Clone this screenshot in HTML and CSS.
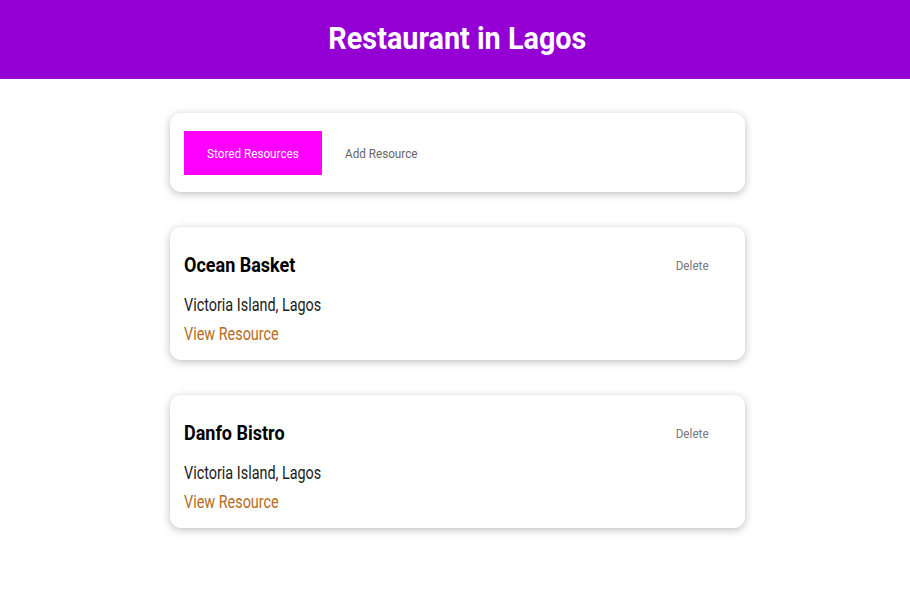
FILE: index.html
```html
<!DOCTYPE html>
<html lang="en">
<head>
<meta charset="utf-8">
<title>Restaurant in Lagos</title>
<link rel="stylesheet" href="styles.css">
</head>
<body>
<header class="topbar">
  <h1 class="topbar-title"><span class="nx nx-c">Restaurant in Lagos</span></h1>
</header>
<main class="page">
  <section class="card tabs">
    <button class="btn btn-solid"><span class="nx nx-c">Stored Resources</span></button>
    <button class="btn btn-flat btn-add"><span class="nx">Add Resource</span></button>
  </section>
  <ul class="list">
    <li class="card item">
      <div class="item-head">
        <h3 class="item-title"><span class="nx">Ocean Basket</span></h3>
        <button class="btn btn-flat btn-delete"><span class="nx nx-r">Delete</span></button>
      </div>
      <p class="item-desc"><span class="nx nx-narrow">Victoria Island, Lagos</span></p>
      <a class="item-link" href="#"><span class="nx nx-narrow">View Resource</span></a>
    </li>
    <li class="card item">
      <div class="item-head">
        <h3 class="item-title"><span class="nx">Danfo Bistro</span></h3>
        <button class="btn btn-flat btn-delete"><span class="nx nx-r">Delete</span></button>
      </div>
      <p class="item-desc"><span class="nx nx-narrow">Victoria Island, Lagos</span></p>
      <a class="item-link" href="#"><span class="nx nx-narrow">View Resource</span></a>
    </li>
  </ul>
</main>
</body>
</html>
```
FILE: styles.css
```css
* { box-sizing: border-box; }
html, body { margin: 0; padding: 0; }
body {
  font-family: Roboto, "Liberation Sans", sans-serif;
  background: #ffffff;
  color: #000;
}
/* narrow (condensed) text rendering */
.nx {
  display: inline-block;
  transform: scaleX(0.9);
  transform-origin: left center;
  white-space: nowrap;
}
.nx-c { transform-origin: center center; }
.nx-r { transform-origin: right center; }
.nx-narrow { transform: scaleX(0.8); }

.topbar {
  height: 79px;
  background: #9400d3;
  display: flex;
  justify-content: center;
  align-items: center;
  padding: 0 0 4px 5px;
}
.topbar-title {
  margin: 0;
  color: #fff;
  font-size: 32px;
  font-weight: 700;
}
.page {
  padding: 34px 0 40px 5px;
  display: flex;
  flex-direction: column;
  align-items: center;
}
.card {
  width: 575px;
  background: #fff;
  border-radius: 11px;
  box-shadow: 0 2px 8px rgba(0, 0, 0, 0.26);
}
.tabs {
  display: flex;
  align-items: center;
  padding: 18px 14px 17px;
}
.btn {
  font-family: inherit;
  border: none;
  cursor: pointer;
  font-size: 13px;
  height: 44px;
  background: transparent;
  padding: 0;
}
.btn-solid {
  background: #ff00ff;
  color: #fff;
  width: 138px;
}
.btn-add {
  padding-left: 23px;
  color: #666;
}
.list {
  list-style: none;
  margin: 35px 0 0;
  padding: 0;
  display: flex;
  flex-direction: column;
  gap: 35px;
}
.item {
  height: 133px;
  padding: 27px 36px 0 14px;
}
.item-head {
  display: flex;
  justify-content: space-between;
  align-items: center;
  height: 22px;
}
.item-title {
  margin: 0;
  font-size: 20px;
  font-weight: 700;
}
.btn-delete {
  height: 22px;
  font-size: 13px;
  color: #777;
}
.item-desc {
  margin: 19px 0 0;
  font-size: 18px;
  line-height: 19px;
  color: #1a1a1a;
}
.item-link {
  display: block;
  margin-top: 10px;
  font-size: 18px;
  line-height: 19px;
  color: #b86b22;
  text-decoration: none;
}
```
